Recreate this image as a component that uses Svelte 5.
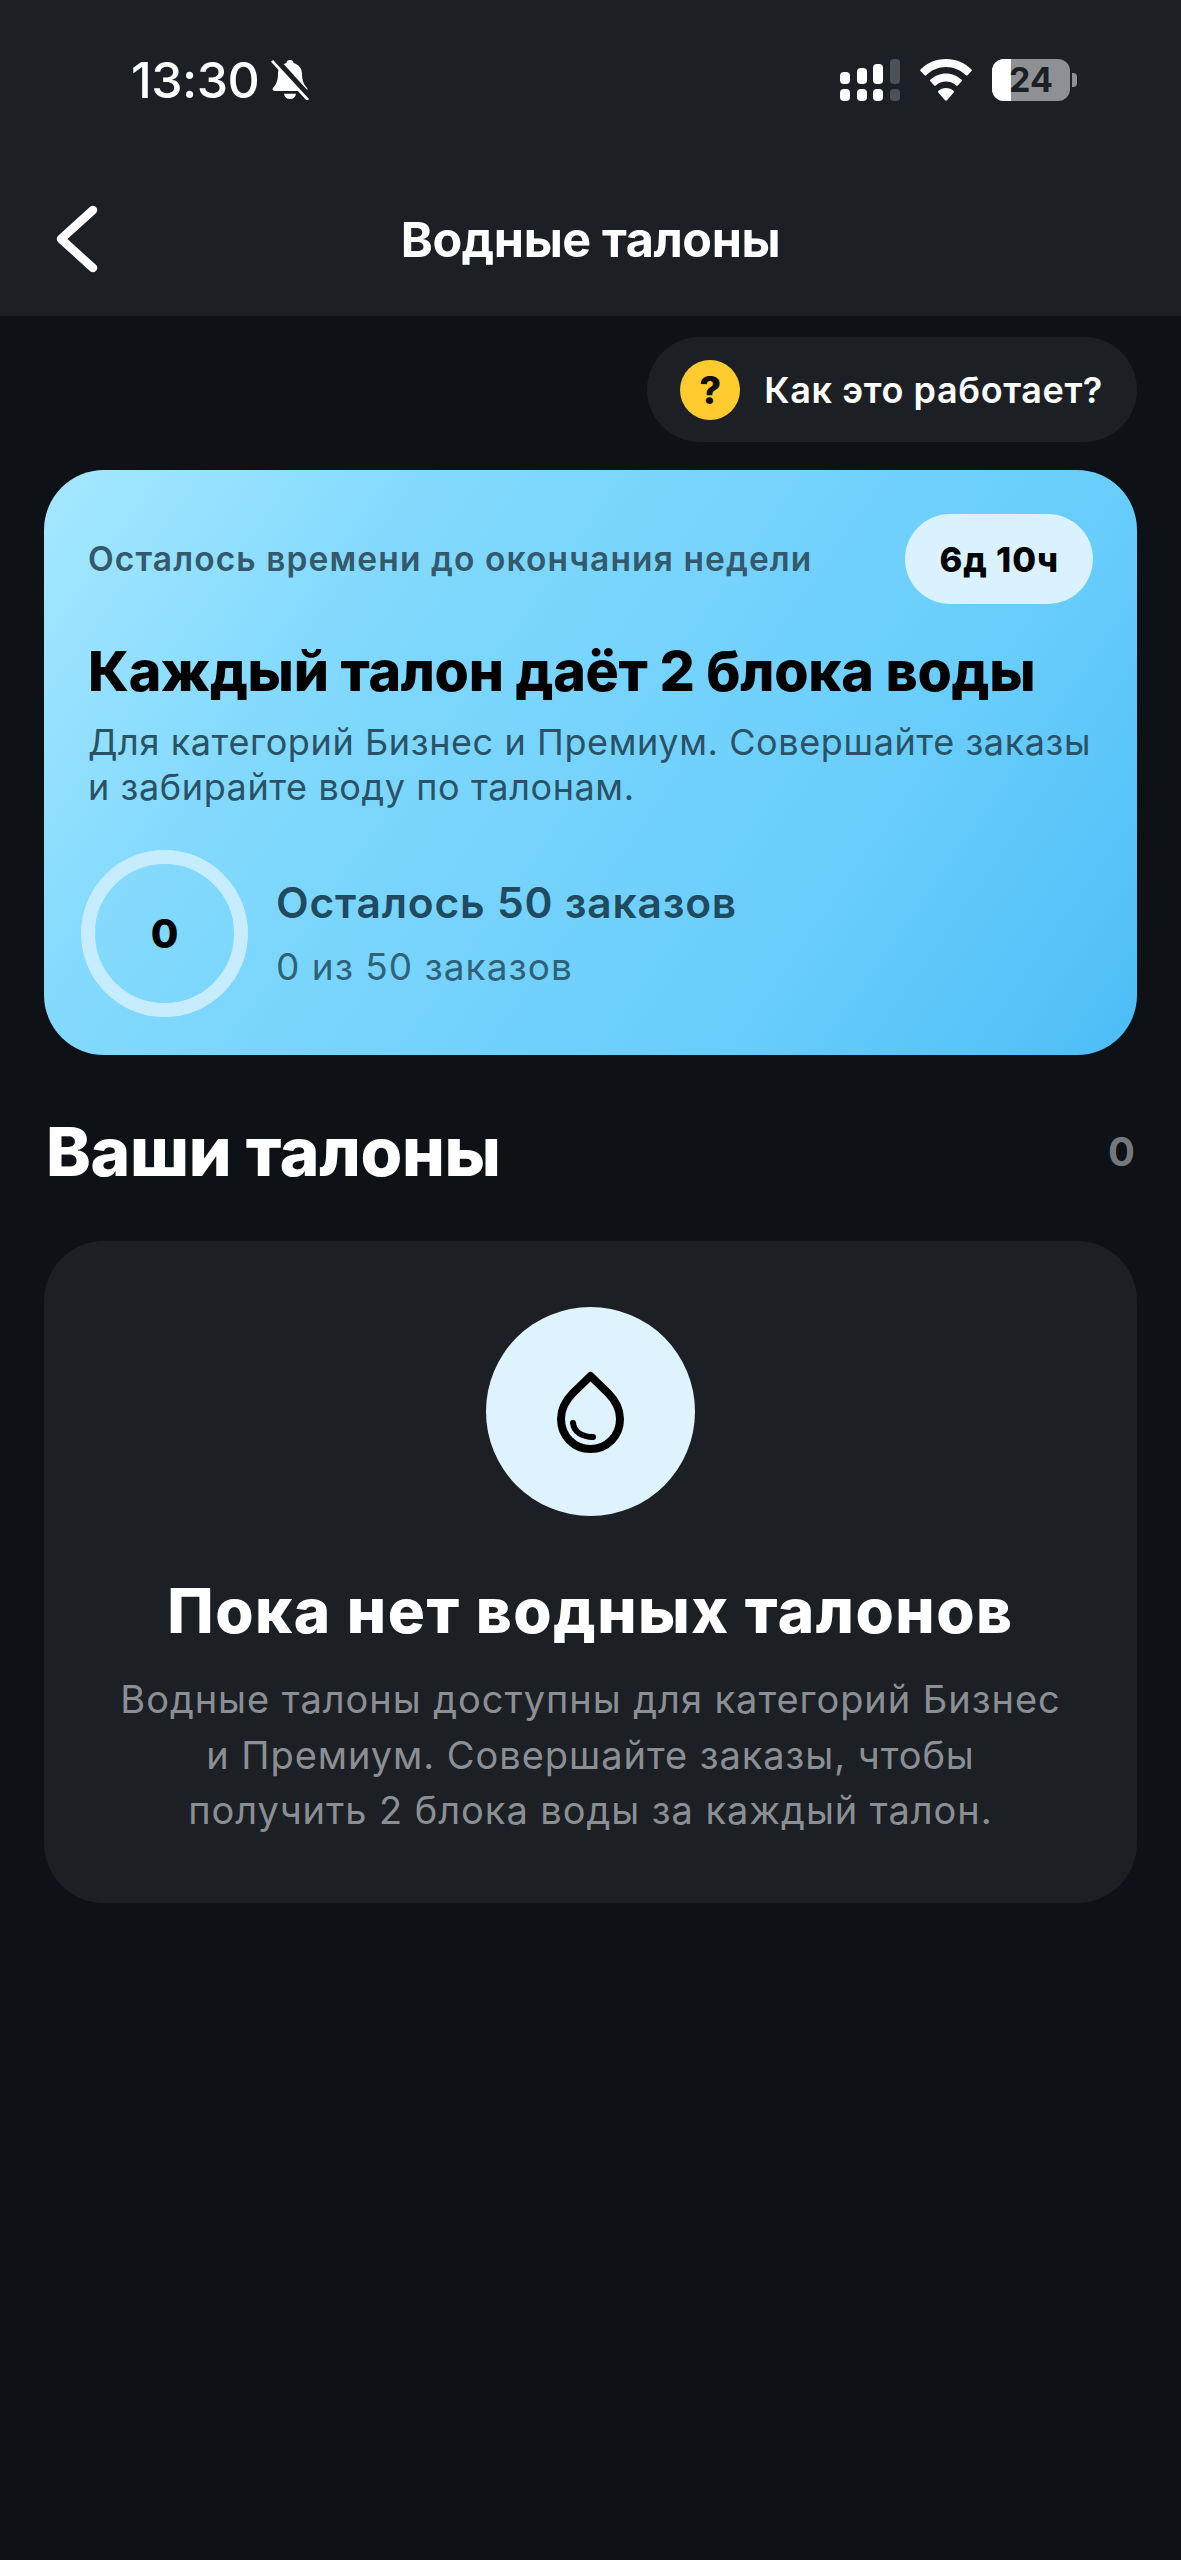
<script>
  const dots = [
    { h: 12, dim: false }, { h: 16, dim: false }, { h: 20, dim: false }, { h: 25, dim: true }
  ];
</script>

<div class="page">
  <header class="top">
    <div class="status">
      <div class="left">
        <span class="time">13:30</span>
        <svg class="bell" viewBox="0 0 38 44" width="38" height="40" preserveAspectRatio="none">
          <path fill="#fff" d="M19 0c2 0 3.400 1.400 3.600 3.200C28 5 31 9.600 31 15c0 8 2 12 5 15.600 1 1.400.4 3.400-1.600 3.400H3.600C1.600 34 1 32 2 30.600 5 27 7 23 7 15 7 9.600 10 5 15.400 3.200 15.600 1.400 17 0 19 0z"/>
          <path fill="#fff" d="M13 37h12c-.4 3.400-3 6-6 6s-5.600-2.600-6-6z"/>
          <path stroke="#1c2025" stroke-width="7" d="M2 -3 40 43"/>
          <path stroke="#fff" stroke-width="2.800" d="M1 1 37 44"/>
        </svg>
      </div>
      <div class="right">
        <div class="signal">
          {#each dots as d}
            <div class="bar-col" class:dim={d.dim}>
              <span class="bar" style="height:{d.h}px"></span>
              <span class="dot"></span>
            </div>
          {/each}
        </div>
        <svg class="wifi" viewBox="0 0 52 42" width="52" height="42">
          <path fill="#fff" d="M26 0c10 0 19 4 25.500 10.500.5.500.5 1 0 1.500l-4 4.300c-.5.500-1 .5-1.500 0C40.500 11 33.500 8 26 8S11.500 11 6 16.300c-.5.500-1 .5-1.500 0L.5 12c-.5-.5-.5-1 0-1.500C7 4 16 0 26 0z"/>
          <path fill="#fff" d="M26 14.500c6 0 11.500 2.400 15.700 6.300.5.500.5 1 0 1.500l-4 4.200c-.5.500-1 .5-1.500 0C33.500 24 30 22.500 26 22.500S18.500 24 15.800 26.500c-.5.500-1 .5-1.500 0l-4-4.200c-.5-.5-.5-1 0-1.500C14.500 16.900 20 14.500 26 14.500z"/>
          <path fill="#fff" d="M26 29c3 0 5.700 1.100 7.700 3 .5.500.5 1 0 1.500l-6.700 7.800c-.6.600-1.400.6-2 0l-6.700-7.800c-.5-.5-.5-1 0-1.500 2-1.900 4.700-3 7.700-3z"/>
        </svg>
        <div class="battery">
          <div class="batt-body"><span class="batt-fill"></span><span class="batt-num">24</span></div>
          <span class="batt-cap"></span>
        </div>
      </div>
    </div>
    <div class="nav">
      <svg class="back" viewBox="0 0 44 68" width="44" height="68">
        <path d="M38 5 6 34l32 29" fill="none" stroke="#fff" stroke-width="8.500" stroke-linecap="round" stroke-linejoin="round"/>
      </svg>
      <h1>Водные талоны</h1>
    </div>
  </header>

  <main>
    <div class="help-row">
      <div class="help">
        <span class="q">?</span>
        <span class="help-text">Как это работает?</span>
      </div>
    </div>

    <section class="promo">
      <div class="promo-top">
        <span class="remain">Осталось времени до окончания недели</span>
        <span class="chip">6д 10ч</span>
      </div>
      <h2>Каждый талон даёт 2 блока воды</h2>
      <p class="desc">Для категорий Бизнес и Премиум. Совершайте заказы<br />и забирайте воду по талонам.</p>
      <div class="progress">
        <div class="ring">0</div>
        <div class="progress-text">
          <div class="p-main">Осталось 50 заказов</div>
          <div class="p-sub">0 из 50 заказов</div>
        </div>
      </div>
    </section>

    <div class="section-head">
      <h3>Ваши талоны</h3>
      <span class="count">0</span>
    </div>

    <section class="empty">
      <div class="drop-circle">
        <svg viewBox="0 0 67 82" width="67" height="82">
          <path d="M33.500 5 L16 22 C9 29 4 38 4 48 C4 65 17 78 33.500 78 C50 78 63 65 63 48 C63 38 58 29 51 22 Z" fill="none" stroke="#000" stroke-width="8" stroke-linejoin="round"/>
          <path d="M16 52c1 9 9 14 20 14" fill="none" stroke="#000" stroke-width="6" stroke-linecap="round"/>
        </svg>
      </div>
      <h4>Пока нет водных талонов</h4>
      <p>Водные талоны доступны для категорий Бизнес<br />и Премиум. Совершайте заказы, чтобы<br />получить 2 блока воды за каждый талон.</p>
    </section>
  </main>
</div>

<style>
  :global(body) { margin: 0; background: #0e1116; }
  .page {
    width: 1181px;
    height: 2560px;
    background: #0e1116;
    font-family: Inter, "Noto Sans", sans-serif;
    color: #fff;
    overflow: hidden;
  }
  .top { background: #1c2025; height: 316px; box-sizing: border-box; }
  .status {
    display: flex;
    justify-content: space-between;
    align-items: center;
    height: 60px;
    padding: 50px 103px 0 131px;
  }
  .left { display: flex; align-items: center; gap: 12px; }
  .time { font-size: 50px; font-weight: 500; letter-spacing: -0.5px; line-height: 60px; }
  .right { display: flex; align-items: center; gap: 20px; margin-right: 1px; }
  .signal { display: flex; gap: 6.700px; align-items: flex-end; height: 42px; }
  .bar-col { display: flex; flex-direction: column; justify-content: flex-end; gap: 5px; width: 10px; }
  .bar, .dot { display: block; background: #fff; border-radius: 4px; width: 10px; }
  .dot { height: 12px; }
  .bar-col .bar { flex: none; }
  .bar-col.dim .bar, .bar-col.dim .dot { background: #4c5157; }
  .battery { display: flex; align-items: center; gap: 2px; }
  .batt-body {
    position: relative;
    width: 78px;
    height: 42px;
    border-radius: 12px;
    background: #8e9093;
    overflow: hidden;
    display: flex;
    align-items: center;
    justify-content: center;
  }
  .batt-fill { position: absolute; left: 0; top: 0; bottom: 0; width: 19px; background: #fff; }
  .batt-num { position: relative; font-size: 34px; font-weight: 700; color: #1c2025; line-height: 1; }
  .batt-cap { width: 5px; height: 14px; background: #8e9093; border-radius: 0 4px 4px 0; }

  .nav { position: relative; display: flex; justify-content: center; align-items: center; height: 68px; margin-top: 95px; }
  .back { position: absolute; left: 55px; top: 0; }
  h1 { margin: 0; font-size: 48.500px; font-weight: 700; letter-spacing: -0.4px; }

  main { padding: 21px 44px 0; }
  .help-row { display: flex; justify-content: flex-end; }
  .help {
    display: flex;
    align-items: center;
    gap: 24px;
    height: 105px;
    box-sizing: border-box;
    padding: 0 34px 0 33px;
    background: #1c2025;
    border-radius: 53px;
  }
  .q {
    width: 60px; height: 60px; border-radius: 50%;
    background: #ffcb2f; color: #111;
    display: flex; align-items: center; justify-content: center;
    font-size: 38px; font-weight: 800;
  }
  .help-text { font-size: 36px; font-weight: 600; letter-spacing: 0.600px; }

  .promo {
    margin-top: 28px;
    height: 585px;
    box-sizing: border-box;
    padding: 44px 44px 0 44px;
    border-radius: 60px;
    background: linear-gradient(125deg, #a6e8ff 0%, #82d9fd 27%, #68cdfb 73%, #4cbdf7 100%);
    color: #000;
  }
  .promo-top { display: flex; justify-content: space-between; align-items: center; height: 90px; }
  .remain { font-size: 33.500px; font-weight: 600; color: #34596c; letter-spacing: 1.100px; }
  .chip {
    height: 90px; box-sizing: border-box; padding: 0 34px;
    border-radius: 45px; background: #daf2ff; color: #000;
    display: flex; align-items: center;
    font-size: 34.500px; font-weight: 800; letter-spacing: 0.900px;
  }
  h2 { margin: 34px 0 0; font-size: 55.500px; font-weight: 800; line-height: 66px; letter-spacing: -0.3px; }
  .desc { margin: 16px 0 0; font-size: 36px; line-height: 45px; color: #2a5266; letter-spacing: 0.600px; }
  .progress { display: flex; align-items: center; gap: 28px; margin: 40px 0 0 -7px; }
  .ring {
    width: 167px; height: 167px; box-sizing: border-box;
    border: 14px solid #c6edff; border-radius: 50%;
    display: flex; align-items: center; justify-content: center;
    font-size: 40px; font-weight: 800; color: #000;
  }
  .p-main { font-size: 42.500px; font-weight: 600; color: #1f4a5f; letter-spacing: 0.800px; line-height: 48px; }
  .p-sub { margin-top: 19px; font-size: 37px; color: #2f6279; letter-spacing: 1px; line-height: 42px; }

  .section-head { display: flex; justify-content: space-between; align-items: center; margin-top: 57px; height: 78px; padding: 0 2px; }
  h3 { margin: 0; font-size: 67.500px; font-weight: 800; letter-spacing: -0.3px; }
  .count { font-size: 40px; font-weight: 700; color: #74777b; }

  .empty {
    margin-top: 51px;
    height: 662px;
    box-sizing: border-box;
    background: #1c2025;
    border-radius: 60px;
    padding-top: 66px;
    display: flex;
    flex-direction: column;
    align-items: center;
    text-align: center;
  }
  .drop-circle {
    width: 209px; height: 209px; border-radius: 50%;
    background: #dff3ff;
    display: flex; align-items: center; justify-content: center;
  }
  h4 { margin: 61px 0 0; font-size: 62px; font-weight: 800; line-height: 68px; letter-spacing: 1.500px; }
  .empty p { margin: 27px 0 0; font-size: 38px; line-height: 55.500px; color: #8b8f94; letter-spacing: 0.950px; }
</style>
